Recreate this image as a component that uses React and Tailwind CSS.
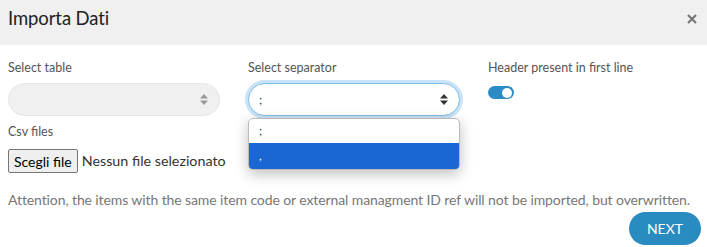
import { useState } from "react";

function SortArrows({ className }) {
  return (
    <svg width="8" height="11" viewBox="0 0 8 11" className={className}>
      <path d="M4 0 L8 4.5 H0 Z" fill="currentColor" />
      <path d="M4 11 L8 6.5 H0 Z" fill="currentColor" />
    </svg>
  );
}

export default function App() {
  const [header, setHeader] = useState(true);

  return (
    <div
      className="w-[707px] h-[247px] bg-white overflow-hidden text-[#555]"
      style={{ fontFamily: "Lato, 'Open Sans', sans-serif" }}
    >
      <div className="h-[45px] bg-[#f0f0f0] flex items-center justify-between pl-2 pr-[10px]">
        <h1 className="text-[18.5px] text-[#222] -mt-[8px] tracking-[-0.1px]">Importa Dati</h1>
        <svg width="10" height="10" viewBox="0 0 10 10" className="-mt-[7px] text-[#777]">
          <path d="M1 1 L9 9 M9 1 L1 9" stroke="currentColor" strokeWidth="2.2" />
        </svg>
      </div>

      <div className="px-2 pt-[15px]">
        <div className="grid grid-cols-[212px_212px_1fr] gap-x-[28px]">
          <div>
            <label className="block text-[12.5px] leading-[16px]">Select table</label>
            <div className="mt-[7px] h-[33px] rounded-full bg-[#f0f0f0] border border-[#e6e6e6] flex items-center justify-end pr-[11px]">
              <SortArrows className="text-[#999]" />
            </div>
          </div>

          <div className="relative">
            <label className="block text-[12.5px] leading-[16px]">Select separator</label>
            <div className="mt-[7px] h-[33px] rounded-full bg-white border border-[#80bde6] shadow-[0_0_0_3px_rgba(102,175,233,0.35)] flex items-center justify-between pl-[10px] pr-[11px]">
              <span className="text-[12px] text-[#333]">;</span>
              <SortArrows className="text-[#333]" />
            </div>
            <div className="absolute left-0 right-0 top-[58px] bg-white border border-[#bbb] rounded-[5px] overflow-hidden shadow-[0_4px_14px_rgba(0,0,0,0.25)] z-10">
              <div className="h-[24px] pl-[10px] flex items-center text-[12px] text-[#333]">;</div>
              <div className="h-[26px] pl-[10px] flex items-center text-[12px] text-white bg-[#1a66d2]">,</div>
            </div>
          </div>

          <div>
            <label className="block text-[12.5px] leading-[16px]">Header present in first line</label>
            <button
              onClick={() => setHeader(!header)}
              className={`mt-[10px] w-[26px] h-[13px] rounded-full flex items-center px-[2px] ${
                header ? "bg-[#2a8bc6] justify-end" : "bg-[#ccc] justify-start"
              }`}
            >
              <span className="w-[10px] h-[10px] rounded-full bg-white" />
            </button>
          </div>
        </div>

        <div className="mt-[8px]">
          <label className="block text-[12.5px] leading-[16px]">Csv files</label>
          <div className="mt-[9px] flex items-center">
            <button className="h-[24px] px-[5px] bg-[#efefef] border border-[#767676] rounded-[2px] text-[14px] text-black">
              Scegli file
            </button>
            <span className="ml-[4px] text-[14.3px] text-[#333]">Nessun file selezionato</span>
          </div>
        </div>

        <p className="mt-[16px] text-[14px] text-[#777] tracking-[-0.1px]">
          Attention, the items with the same item code or external managment ID ref will not be imported, but overwritten.
        </p>

        <div className="flex justify-end -mr-[2px] mt-[2px]">
          <button className="w-[72px] h-[33px] rounded-full bg-[#2a8bc0] text-white text-[14px]">NEXT</button>
        </div>
      </div>
    </div>
  );
}
